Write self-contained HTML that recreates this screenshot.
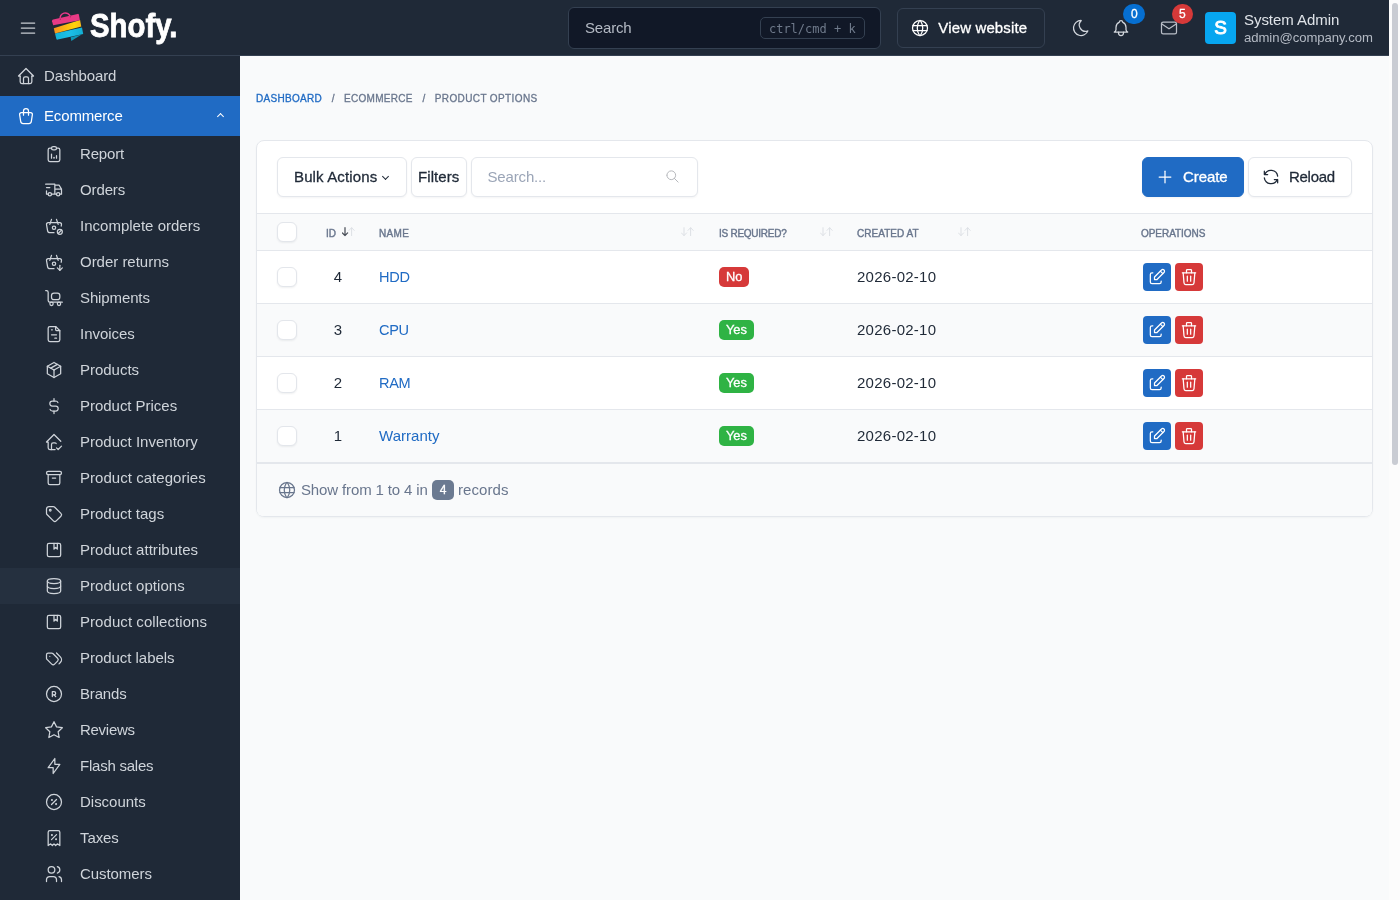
<!DOCTYPE html>
<html lang="en"><head>
<meta charset="utf-8">
<title>Product options | Shofy</title>
<style>
:root{--ff:"Liberation Sans",sans-serif;--dark:#1f2937;--primary:#206bc4;--text:#1f2937;--muted:#69768d;--border:#e4e7ec;--bg:#f9fafb}
*{box-sizing:border-box}
html,body{margin:0;padding:0}
body{width:1400px;height:900px;overflow:hidden;position:relative;background:var(--bg);color:var(--text);font-family:var(--ff);font-size:14px;line-height:20px;-webkit-font-smoothing:antialiased}
svg.i{fill:none;stroke:currentColor;stroke-width:1.5;stroke-linecap:round;stroke-linejoin:round;display:block}
a{color:var(--primary);text-decoration:none}
.abs{position:absolute}
/* header */
.header{will-change:transform;position:absolute;left:0;top:0;width:1389px;height:56px;background:var(--dark);border-bottom:1px solid #344051;color:#fff}

.logo{left:90px;top:5.7px;font-family:"Liberation Sans",sans-serif;font-size:32.6px;line-height:40px;font-weight:700;letter-spacing:0;-webkit-text-stroke:.8px #fff;color:#fff;white-space:nowrap;transform:scaleX(.9);transform-origin:0 0}
.hsearch{left:568px;top:7px;width:313px;height:42px;border:1px solid #344051;border-radius:6px;background:#111827}
.kbd{left:191px;top:9px;width:104.6px;height:22px;border:1px solid #344051;border-radius:5px;font-family:"DejaVu Sans Mono","Liberation Mono",monospace;font-size:12px;line-height:22px;text-align:center;color:#6f7a8b;white-space:nowrap}
.hview{left:897.3px;top:8px;width:147.4px;height:40px;border:1px solid #344051;border-radius:6px;color:#fff;white-space:nowrap}
.hbadge{top:4px;height:20px;border-radius:10px;color:#fff;font-size:12px;line-height:20px;font-weight:400;-webkit-text-stroke:.3px;text-align:center}
.avatar{left:1205px;top:12px;width:31.2px;height:32px;border-radius:4px;background:#07a6f0;color:#fff;font-weight:400;-webkit-text-stroke:.9px #fff;font-size:19px;line-height:32px;text-align:center}
/* sidebar */
.sidebar{will-change:transform;position:absolute;left:0;top:56px;width:240px;height:844px;background:var(--dark);color:#cfd4da}

.nav1{position:relative;height:40px;padding:10px 0 10px 44px;white-space:nowrap}
.nav1 svg.i{position:absolute;left:16px;top:10px}
.nav1 .chev{position:absolute;left:217.9px;top:17.6px;width:5px;height:5px;border-left:1px solid #fff;border-top:1px solid #fff;transform:rotate(45deg)}
.nav1.act{background:var(--primary);color:#fff}
.nav2{position:relative;height:36px;padding:8px 0 8px 80px;white-space:nowrap}
.nav2 svg.i{position:absolute;left:44px;top:8px}
.nav2.cur{background:#25303f}
/* scrollbar */
.sb{position:absolute;left:1389px;top:0;width:11px;height:900px;background:#fcfcfc}
.sb i{position:absolute;left:3px;top:3px;width:6px;height:462px;border-radius:3px;background:#c9ccd3}

.bc{left:16px;top:33px;height:20px;font-size:10px;line-height:20px;font-weight:400;-webkit-text-stroke:.3px;letter-spacing:.04em;color:var(--muted);white-space:nowrap;text-transform:uppercase}
.bc i{font-style:normal;display:inline-block;width:22px;text-align:center;letter-spacing:0}
.card{left:16px;top:84px;width:1117px;height:377px;background:#fff;border:1px solid var(--border);border-radius:8px;box-shadow:0 1px 2px rgba(31,41,55,.04)}
.btn{height:40px;border:1px solid var(--border);border-radius:6px;background:#fff;box-shadow:0 1px 2px rgba(31,41,55,.05);white-space:nowrap}
.btn.pri{background:var(--primary);border-color:var(--primary);color:#fff}
.caret{position:absolute;left:105px;top:16px;width:5px;height:5px;border-left:1px solid var(--text);border-bottom:1px solid var(--text);transform:rotate(-45deg)}
.thead{left:0;top:72px;width:1115px;height:38px;background:var(--bg);border-top:1px solid var(--border);border-bottom:1px solid var(--border)}
.th{top:9.5px;font-size:10px;line-height:20px;font-weight:400;-webkit-text-stroke:.4px;color:var(--muted);white-space:nowrap}
.srt{top:13px;fill:none;stroke-width:1;stroke-linecap:round;stroke-linejoin:round}
.cb{position:absolute;width:20px;height:20px;border:1px solid #e3e6eb;border-radius:6px;background:#fff;box-shadow:0 1px 2px rgba(31,41,55,.07)}
.row{left:0;width:1115px;height:53px;border-bottom:1px solid var(--border);white-space:nowrap}
.row.alt{background:var(--bg)}
.id{left:61px;top:16px;width:40px;text-align:center}
.bdg{left:462px;top:16px;height:20px;border-radius:5px;color:#fff;font-size:12px;line-height:20px;font-weight:400;-webkit-text-stroke:.3px;padding:0 7px}
.bdg.red{background:#d63939}
.bdg.grn{background:#2fb344}
.op{top:12px;width:28px;height:28px;border-radius:4px;color:#fff}
.op svg{position:absolute;left:4px;top:4px}
.foot{left:0;top:322px;width:1115px;height:53px;border-top:1px solid var(--border);background:var(--bg);border-radius:0 0 6px 6px;color:var(--muted)}
.cnt{left:175px;top:16px;width:22px;height:20px;border-radius:5px;background:#6b7a91;color:#fff;font-size:12px;line-height:20px;font-weight:400;-webkit-text-stroke:.3px;text-align:center}
.id{font-size:15px}
/* main */
.main{will-change:transform;position:absolute;left:240px;top:56px;width:1149px;height:844px}
</style>
</head>
<body>
<div class="header" id="header">
<svg class="i abs" style="left:18px;top:18px;color:#c8ccd2" width="20" height="20" viewBox="0 0 24 24"><path d="M4 6l16 0"></path><path d="M4 12l16 0"></path><path d="M4 18l16 0"></path></svg>
<svg class="abs" style="left:44px;top:6px" width="50" height="42" viewBox="0 0 50 42">
<defs><linearGradient id="og" x1="0" y1="0" x2="1" y2="0"><stop offset="0" stop-color="#f7931e"></stop><stop offset=".75" stop-color="#ffd40a"></stop><stop offset="1" stop-color="#f9b81a"></stop></linearGradient>
<linearGradient id="cg" x1="0" y1="0" x2="1" y2="0"><stop offset="0" stop-color="#12b3d6"></stop><stop offset=".5" stop-color="#1dc0ea"></stop><stop offset="1" stop-color="#12aed2"></stop></linearGradient></defs>
<path d="M26.6 31.2 L27.3 35 L37.6 28.6Z" fill="#0e98b8"></path>
<path d="M11 27.4 L38 21.500 L39.2 28 L13.8 33.6 Q12.6 33.9 12.3 32.8Z" fill="url(#cg)"></path>
<path d="M9.8 22.2 L36.1 13.9 L37.3 20.5 L11 27.6Z" fill="url(#og)"></path>
<path d="M16.3 13.4 a5.1 5.1 0 0 1 10 -2.6" fill="none" stroke="#e8388a" stroke-width="1.5" stroke-linecap="round"></path>
<path d="M9.2 13.6 L33.6 7.9 Q34.6 7.7 34.9 8.7 L35.9 14.2 L9.2 19.3 L8 15.2 Q7.8 14 9.2 13.6Z" fill="#e83a85"></path>
<circle cx="16.3" cy="13.3" r=".7" fill="#b02a66"></circle><circle cx="26.4" cy="10.8" r=".7" fill="#b02a66"></circle>
</svg>
<span class="abs logo">Shofy.</span>
<div class="abs hsearch"><span class="abs" style="left: 16px; top: 10px; color: rgb(180, 186, 196); font-size: 15px; letter-spacing: -0.18px;">Search</span><span class="abs kbd">ctrl/cmd + k</span></div>
<div class="abs hview"><svg class="i abs" style="left:12px;top:9px" width="20" height="20" viewBox="0 0 24 24"><path d="M3 12a9 9 0 1 0 18 0a9 9 0 0 0 -18 0"></path><path d="M3.6 9h16.800"></path><path d="M3.6 15h16.800"></path><path d="M11.5 3a17 17 0 0 0 0 18"></path><path d="M12.500 3a17 17 0 0 1 0 18"></path></svg><span class="abs" style="left: 40px; top: 9px; font-weight: 400; -webkit-text-stroke: 0.3px; font-size: 15px; letter-spacing: 0.14px;">View website</span></div>
<svg class="i abs" style="left:1070.5px;top:18px;color:#d3d7dd" width="20" height="20" viewBox="0 0 24 24"><path d="M12 3c.132 0 .263 0 .393 0a7.500 7.500 0 0 0 7.920 12.446a9 9 0 1 1 -8.313 -12.454z"></path></svg>
<svg class="i abs" style="left:1110.5px;top:18px;color:#d3d7dd" width="20" height="20" viewBox="0 0 24 24"><path d="M10 5a2 2 0 1 1 4 0a7 7 0 0 1 4 6v3a4 4 0 0 0 2 3h-16a4 4 0 0 0 2 -3v-3a7 7 0 0 1 4 -6"></path><path d="M9 17v1a3 3 0 0 0 6 0v-1"></path></svg>
<span class="abs hbadge" style="left:1123.4px;width:22px;background:#066fd1">0</span>
<svg class="i abs" style="left:1158.5px;top:18px;color:#b9bec7" width="20" height="20" viewBox="0 0 24 24"><path d="M3 7a2 2 0 0 1 2 -2h14a2 2 0 0 1 2 2v10a2 2 0 0 1 -2 2h-14a2 2 0 0 1 -2 -2v-10z"></path><path d="M3 7l9 6l9 -6"></path></svg>
<span class="abs hbadge" style="left:1171.8px;width:21.2px;background:#d63939">5</span>
<span class="abs avatar">S</span>
<span class="abs" style="left: 1244px; top: 10px; color: rgb(223, 227, 232); white-space: nowrap; font-size: 15px; letter-spacing: -0.05px;">System Admin</span>
<span class="abs" style="left: 1244px; top: 29px; color: rgb(180, 186, 196); font-size: 13.13px; line-height: 18px; white-space: nowrap; letter-spacing: -0.06px;">admin@company.com</span>
</div>
<div class="sidebar" id="sidebar">
<div class="nav1"><svg class="i" width="20" height="20" viewBox="0 0 24 24"><path d="M5 12l-2 0l9 -9l9 9l-2 0"></path><path d="M5 12v7a2 2 0 0 0 2 2h10a2 2 0 0 0 2 -2v-7"></path><path d="M9 21v-6a2 2 0 0 1 2 -2h2a2 2 0 0 1 2 2v6"></path></svg><span style="font-size: 15px; letter-spacing: -0.13px;">Dashboard</span></div>
<div class="nav1 act"><svg class="i" width="20" height="20" viewBox="0 0 24 24"><path d="M6.331 8h11.339a2 2 0 0 1 1.977 2.304l-1.255 8.152a3 3 0 0 1 -2.966 2.544h-6.852a3 3 0 0 1 -2.965 -2.544l-1.255 -8.152a2 2 0 0 1 1.977 -2.304z"></path><path d="M9 11v-5a3 3 0 0 1 6 0v5"></path></svg><span style="font-size: 15px; letter-spacing: -0.15px;">Ecommerce</span><b class="chev"></b></div>
<div class="nav2"><svg class="i" width="20" height="20" viewBox="0 0 24 24"><path d="M9 5h-2a2 2 0 0 0 -2 2v12a2 2 0 0 0 2 2h10a2 2 0 0 0 2 -2v-12a2 2 0 0 0 -2 -2h-2"></path><path d="M9 3m0 2a2 2 0 0 1 2 -2h2a2 2 0 0 1 2 2v0a2 2 0 0 1 -2 2h-2a2 2 0 0 1 -2 -2z"></path><path d="M9 17v-5"></path><path d="M12 17v-1"></path><path d="M15 17v-3"></path></svg><span style="font-size: 15px; letter-spacing: -0.17px;">Report</span></div>
<div class="nav2"><svg class="i" width="20" height="20" viewBox="0 0 24 24"><path d="M7 17m-2 0a2 2 0 1 0 4 0a2 2 0 1 0 -4 0"></path><path d="M17 17m-2 0a2 2 0 1 0 4 0a2 2 0 1 0 -4 0"></path><path d="M5 17h-2v-4m-1 -8h11v12m-4 0h6m4 0h2v-6h-8m0 -5h5l3 5"></path><path d="M3 9l4 0"></path></svg><span style="font-size: 15px; letter-spacing: -0.12px;">Orders</span></div>
<div class="nav2"><svg class="i" width="20" height="20" viewBox="0 0 24 24"><path d="M17 10l-2 -6"></path><path d="M7 10l2 -6"></path><path d="M12 20h-4.756a3 3 0 0 1 -2.965 -2.544l-1.255 -7.152a2 2 0 0 1 1.977 -2.304h13.999a2 2 0 0 1 1.977 2.304l-.3 1.713"></path><path d="M10 14a2 2 0 1 0 4 0a2 2 0 0 0 -4 0"></path><path d="M19 19m-3 0a3 3 0 1 0 6 0a3 3 0 1 0 -6 0"></path><path d="M17 21l4 -4"></path></svg><span style="font-size: 15px; letter-spacing: 0.01px;">Incomplete orders</span></div>
<div class="nav2"><svg class="i" width="20" height="20" viewBox="0 0 24 24"><path d="M17 10l-2 -6"></path><path d="M7 10l2 -6"></path><path d="M12 20h-4.756a3 3 0 0 1 -2.965 -2.544l-1.255 -7.152a2 2 0 0 1 1.977 -2.304h13.999a2 2 0 0 1 1.977 2.304l-.349 1.989"></path><path d="M10 14a2 2 0 1 0 4 0a2 2 0 0 0 -4 0"></path><path d="M19 16v6"></path><path d="M22 19l-3 3l-3 -3"></path></svg><span style="font-size: 15px; letter-spacing: -0.02px;">Order returns</span></div>
<div class="nav2"><svg class="i" width="20" height="20" viewBox="0 0 24 24"><path d="M2 3h1a2 2 0 0 1 2 2v10a2 2 0 0 0 2 2h15"></path><path d="M9 6m0 3a3 3 0 0 1 3 -3h4a3 3 0 0 1 3 3v2a3 3 0 0 1 -3 3h-4a3 3 0 0 1 -3 -3z"></path><path d="M9 19m-2 0a2 2 0 1 0 4 0a2 2 0 1 0 -4 0"></path><path d="M18 19m-2 0a2 2 0 1 0 4 0a2 2 0 1 0 -4 0"></path></svg><span style="font-size: 15px; letter-spacing: -0.12px;">Shipments</span></div>
<div class="nav2"><svg class="i" width="20" height="20" viewBox="0 0 24 24"><path d="M14 3v4a1 1 0 0 0 1 1h4"></path><path d="M17 21h-10a2 2 0 0 1 -2 -2v-14a2 2 0 0 1 2 -2h7l5 5v11a2 2 0 0 1 -2 2z"></path><path d="M9 7l1 0"></path><path d="M9 13l6 0"></path><path d="M13 17l2 0"></path></svg><span style="font-size: 15px; letter-spacing: -0.03px;">Invoices</span></div>
<div class="nav2"><svg class="i" width="20" height="20" viewBox="0 0 24 24"><path d="M12 3l8 4.500l0 9l-8 4.500l-8 -4.500l0 -9l8 -4.500"></path><path d="M12 12l8 -4.500"></path><path d="M12 12l0 9"></path><path d="M12 12l-8 -4.500"></path><path d="M16 5.250l-8 4.500"></path></svg><span style="font-size: 15px; letter-spacing: -0.02px;">Products</span></div>
<div class="nav2"><svg class="i" width="20" height="20" viewBox="0 0 24 24"><path d="M16.700 8a3 3 0 0 0 -2.700 -2h-4a3 3 0 0 0 0 6h4a3 3 0 0 1 0 6h-4a3 3 0 0 1 -2.700 -2"></path><path d="M12 3v3m0 12v3"></path></svg><span style="font-size: 15px; letter-spacing: -0.03px;">Product Prices</span></div>
<div class="nav2"><svg class="i" width="20" height="20" viewBox="0 0 24 24"><path d="M9 21v-6a2 2 0 0 1 2 -2h2c.641 0 1.212 .302 1.578 .771"></path><path d="M20.136 11.136l-8.136 -8.136l-9 9h2v7a2 2 0 0 0 2 2h6.344"></path><path d="M15 19l2 2l4 -4"></path></svg><span style="font-size: 15px; letter-spacing: 0.01px;">Product Inventory</span></div>
<div class="nav2"><svg class="i" width="20" height="20" viewBox="0 0 24 24"><path d="M3 4m0 2a2 2 0 0 1 2 -2h14a2 2 0 0 1 2 2v0a2 2 0 0 1 -2 2h-14a2 2 0 0 1 -2 -2z"></path><path d="M5 8v10a2 2 0 0 0 2 2h10a2 2 0 0 0 2 -2v-10"></path><path d="M10 12l4 0"></path></svg><span style="font-size: 15px; letter-spacing: 0.04px;">Product categories</span></div>
<div class="nav2"><svg class="i" width="20" height="20" viewBox="0 0 24 24"><path d="M7.500 7.500m-1 0a1 1 0 1 0 2 0a1 1 0 1 0 -2 0"></path><path d="M3 6v5.172a2 2 0 0 0 .586 1.414l7.710 7.710a2.410 2.410 0 0 0 3.408 0l5.592 -5.592a2.410 2.410 0 0 0 0 -3.408l-7.710 -7.710a2 2 0 0 0 -1.414 -.586h-5.172a3 3 0 0 0 -3 3z"></path></svg><span style="font-size: 15px;">Product tags</span></div>
<div class="nav2"><svg class="i" width="20" height="20" viewBox="0 0 24 24"><path d="M4 4m0 2a2 2 0 0 1 2 -2h12a2 2 0 0 1 2 2v12a2 2 0 0 1 -2 2h-12a2 2 0 0 1 -2 -2z"></path><path d="M12 4v7l2 -2l2 2v-7"></path></svg><span style="font-size: 15px; letter-spacing: 0.03px;">Product attributes</span></div>
<div class="nav2 cur"><svg class="i" width="20" height="20" viewBox="0 0 24 24"><path d="M12 6m-8 0a8 3 0 1 0 16 0a8 3 0 1 0 -16 0"></path><path d="M4 6v6a8 3 0 0 0 16 0v-6"></path><path d="M4 12v6a8 3 0 0 0 16 0v-6"></path></svg><span style="font-size: 15px; letter-spacing: 0.03px;">Product options</span></div>
<div class="nav2"><svg class="i" width="20" height="20" viewBox="0 0 24 24"><path d="M4 4m0 2a2 2 0 0 1 2 -2h12a2 2 0 0 1 2 2v12a2 2 0 0 1 -2 2h-12a2 2 0 0 1 -2 -2z"></path><path d="M12 4v7l2 -2l2 2v-7"></path></svg><span style="font-size: 15px; letter-spacing: 0.06px;">Product collections</span></div>
<div class="nav2"><svg class="i" width="20" height="20" viewBox="0 0 24 24"><path d="M3 8v4.172a2 2 0 0 0 .586 1.414l5.710 5.710a2.410 2.410 0 0 0 3.408 0l3.592 -3.592a2.410 2.410 0 0 0 0 -3.408l-5.710 -5.710a2 2 0 0 0 -1.414 -.586h-4.172a2 2 0 0 0 -2 2z"></path><path d="M18 19l1.592 -1.592a4.820 4.820 0 0 0 0 -6.816l-4.592 -4.592"></path><path d="M7 10h-.010"></path></svg><span style="font-size: 15px; letter-spacing: -0.04px;">Product labels</span></div>
<div class="nav2"><svg class="i" width="20" height="20" viewBox="0 0 24 24"><path d="M12 12m-9 0a9 9 0 1 0 18 0a9 9 0 1 0 -18 0"></path><path d="M10 15v-6h2a2 2 0 1 1 0 4h-2"></path><path d="M14 15l-2 -2"></path></svg><span style="font-size: 15px; letter-spacing: -0.17px;">Brands</span></div>
<div class="nav2"><svg class="i" width="20" height="20" viewBox="0 0 24 24"><path d="M12 17.750l-6.172 3.245l1.179 -6.873l-5 -4.867l6.900 -1l3.086 -6.253l3.086 6.253l6.900 1l-5 4.867l1.179 6.873z"></path></svg><span style="font-size: 15px; letter-spacing: -0.28px;">Reviews</span></div>
<div class="nav2"><svg class="i" width="20" height="20" viewBox="0 0 24 24"><path d="M13 3l0 7l6 0l-8 11l0 -7l-6 0l8 -11"></path></svg><span style="font-size: 15px; letter-spacing: -0.23px;">Flash sales</span></div>
<div class="nav2"><svg class="i" width="20" height="20" viewBox="0 0 24 24"><path d="M9 15l6 -6"></path><circle cx="9.500" cy="9.500" r=".5" fill="currentColor"></circle><circle cx="14.500" cy="14.500" r=".5" fill="currentColor"></circle><path d="M12 12m-9 0a9 9 0 1 0 18 0a9 9 0 1 0 -18 0"></path></svg><span style="font-size: 15px; letter-spacing: -0.02px;">Discounts</span></div>
<div class="nav2"><svg class="i" width="20" height="20" viewBox="0 0 24 24"><path d="M9 14l6 -6"></path><circle cx="9.500" cy="8.500" r=".5" fill="currentColor"></circle><circle cx="14.500" cy="13.500" r=".5" fill="currentColor"></circle><path d="M5 21v-16a2 2 0 0 1 2 -2h10a2 2 0 0 1 2 2v16l-3 -2l-2 2l-2 -2l-2 2l-2 -2l-3 2"></path></svg><span style="font-size: 15px; letter-spacing: -0.08px;">Taxes</span></div>
<div class="nav2"><svg class="i" width="20" height="20" viewBox="0 0 24 24"><path d="M9 7m-4 0a4 4 0 1 0 8 0a4 4 0 1 0 -8 0"></path><path d="M3 21v-2a4 4 0 0 1 4 -4h4a4 4 0 0 1 4 4v2"></path><path d="M16 3.130a4 4 0 0 1 0 7.750"></path><path d="M21 21v-2a4 4 0 0 0 -3 -3.850"></path></svg><span style="font-size: 15px; letter-spacing: -0.08px;">Customers</span></div>
</div>
<div class="main" id="main">
<div class="abs bc"><a style="font-size: 10px; letter-spacing: 0.3px;">DASHBOARD</a><i>/</i><span style="font-size: 10px; letter-spacing: 0.29px;">ECOMMERCE</span><i>/</i><span style="font-size: 10px; letter-spacing: 0.38px;">PRODUCT OPTIONS</span></div>
<div class="abs card">
 <div class="abs btn" style="left:20px;top:16px;width:129.5px"><span class="abs" style="left: 16px; top: 9px; font-weight: 400; -webkit-text-stroke: 0.3px; font-size: 15px; letter-spacing: 0.13px;">Bulk Actions</span><b class="caret"></b></div>
 <div class="abs btn" style="left:153.5px;top:16px;width:56px"><span class="abs" style="left: 6.5px; top: 9px; font-weight: 400; -webkit-text-stroke: 0.3px; font-size: 15px; letter-spacing: 0.07px;">Filters</span></div>
 <div class="abs btn" style="left:213.5px;top:16px;width:227.6px"><span class="abs" style="left: 16px; top: 9px; color: rgb(155, 165, 183); font-size: 15px; letter-spacing: -0.16px;">Search...</span><svg class="i abs" style="left:193px;top:10.5px;color:#b1b3b8;stroke-width:1.5" width="15" height="15" viewBox="0 0 24 24"><path d="M10 10m-7 0a7 7 0 1 0 14 0a7 7 0 1 0 -14 0"></path><path d="M21 21l-6 -6"></path></svg></div>
 <div class="abs btn pri" style="left:885px;top:16px;width:102px"><svg class="i abs" style="left:12px;top:9px" width="20" height="20" viewBox="0 0 24 24"><path d="M12 5l0 14"></path><path d="M5 12l14 0"></path></svg><span class="abs" style="left: 40px; top: 9px; font-weight: 400; -webkit-text-stroke: 0.3px; font-size: 15px; letter-spacing: -0.08px;">Create</span></div>
 <div class="abs btn" style="left:991px;top:16px;width:104px"><svg class="i abs" style="left:12px;top:9px" width="20" height="20" viewBox="0 0 24 24"><path d="M20 11a8.100 8.100 0 0 0 -15.500 -2m-.5 -4v4h4"></path><path d="M4 13a8.100 8.100 0 0 0 15.500 2m.5 4v-4h-4"></path></svg><span class="abs" style="left: 40px; top: 9px; font-weight: 400; -webkit-text-stroke: 0.3px; font-size: 15px; letter-spacing: -0.29px;">Reload</span></div>
 <div class="abs thead">
  <b class="cb" style="left:20px;top:8px"></b>
  <span class="abs th" style="left: 69px; font-size: 10px;">ID</span><svg class="abs srt" style="left:84.9px" width="14" height="10" viewBox="0 0 14 10"><path d="M3 .7v7.8M.4 5.900l2.600 2.700l2.600 -2.700" stroke="#4b5059" stroke-width="1.25"></path><path d="M9.600 8.600v-7.800M7 3.400l2.600 -2.700l2.600 2.700" stroke="#dde0e5"></path></svg>
  <span class="abs th" style="left: 122px; font-size: 10px; letter-spacing: 0.31px;">NAME</span><svg class="abs srt" style="left:424.4px" width="14" height="10" viewBox="0 0 14 10"><path d="M3 .7v7.8M.4 5.900l2.600 2.700l2.600 -2.700" stroke="#dde0e5"></path><path d="M9.600 8.600v-7.800M7 3.400l2.600 -2.700l2.600 2.700" stroke="#dde0e5"></path></svg>
  <span class="abs th" style="left: 462px; font-size: 10px; letter-spacing: -0.26px;">IS REQUIRED?</span><svg class="abs srt" style="left:562.5px" width="14" height="10" viewBox="0 0 14 10"><path d="M3 .7v7.8M.4 5.900l2.600 2.700l2.600 -2.700" stroke="#dde0e5"></path><path d="M9.600 8.600v-7.800M7 3.400l2.600 -2.700l2.600 2.700" stroke="#dde0e5"></path></svg>
  <span class="abs th" style="left: 600px; font-size: 10px; letter-spacing: 0.04px;">CREATED AT</span><svg class="abs srt" style="left:700.5px" width="14" height="10" viewBox="0 0 14 10"><path d="M3 .7v7.8M.4 5.900l2.600 2.700l2.600 -2.700" stroke="#dde0e5"></path><path d="M9.600 8.600v-7.800M7 3.400l2.600 -2.700l2.600 2.700" stroke="#dde0e5"></path></svg>
  <span class="abs th" style="left: 884px; font-size: 10px; letter-spacing: -0.05px;">OPERATIONS</span>
 </div>
 <div class="abs row" style="top:110px">
  <b class="cb" style="left:20px;top:16px"></b>
  <span class="abs id">4</span>
  <a class="abs" style="left: 122px; top: 16px; font-size: 14.56px; letter-spacing: -0.3px;">HDD</a>
  <span class="abs bdg red" style="font-size: 12.86px; letter-spacing: -0.06px;">No</span>
  <span class="abs" style="left: 600px; top: 16px; font-size: 15px; letter-spacing: 0.26px;">2026-02-10</span>
  <span class="abs op" style="left:886px;background:var(--primary)"><svg class="i" width="20" height="20" viewBox="0 0 24 24"><path d="M7 7h-1a2 2 0 0 0 -2 2v9a2 2 0 0 0 2 2h9a2 2 0 0 0 2 -2v-1"></path><path d="M20.385 6.585a2.100 2.100 0 0 0 -2.970 -2.970l-8.415 8.385v3h3l8.385 -8.415z"></path><path d="M16 5l3 3"></path></svg></span>
  <span class="abs op" style="left:918px;background:#d63939"><svg class="i" width="20" height="20" viewBox="0 0 24 24"><path d="M4 7l16 0"></path><path d="M10 11l0 6"></path><path d="M14 11l0 6"></path><path d="M5 7l1 12a2 2 0 0 0 2 2h8a2 2 0 0 0 2 -2l1 -12"></path><path d="M9 7v-3a1 1 0 0 1 1 -1h4a1 1 0 0 1 1 1v3"></path></svg></span>
 </div>
 <div class="abs row alt" style="top:163px">
  <b class="cb" style="left:20px;top:16px"></b>
  <span class="abs id">3</span>
  <a class="abs" style="left: 122px; top: 16px; font-size: 14.56px; letter-spacing: -0.37px;">CPU</a>
  <span class="abs bdg grn" style="font-size: 12.86px; letter-spacing: -0.05px;">Yes</span>
  <span class="abs" style="left: 600px; top: 16px; font-size: 15px; letter-spacing: 0.26px;">2026-02-10</span>
  <span class="abs op" style="left:886px;background:var(--primary)"><svg class="i" width="20" height="20" viewBox="0 0 24 24"><path d="M7 7h-1a2 2 0 0 0 -2 2v9a2 2 0 0 0 2 2h9a2 2 0 0 0 2 -2v-1"></path><path d="M20.385 6.585a2.100 2.100 0 0 0 -2.970 -2.970l-8.415 8.385v3h3l8.385 -8.415z"></path><path d="M16 5l3 3"></path></svg></span>
  <span class="abs op" style="left:918px;background:#d63939"><svg class="i" width="20" height="20" viewBox="0 0 24 24"><path d="M4 7l16 0"></path><path d="M10 11l0 6"></path><path d="M14 11l0 6"></path><path d="M5 7l1 12a2 2 0 0 0 2 2h8a2 2 0 0 0 2 -2l1 -12"></path><path d="M9 7v-3a1 1 0 0 1 1 -1h4a1 1 0 0 1 1 1v3"></path></svg></span>
 </div>
 <div class="abs row" style="top:216px">
  <b class="cb" style="left:20px;top:16px"></b>
  <span class="abs id">2</span>
  <a class="abs" style="left: 122px; top: 16px; font-size: 14.56px; letter-spacing: -0.33px;">RAM</a>
  <span class="abs bdg grn" style="font-size: 12.86px; letter-spacing: -0.05px;">Yes</span>
  <span class="abs" style="left: 600px; top: 16px; font-size: 15px; letter-spacing: 0.26px;">2026-02-10</span>
  <span class="abs op" style="left:886px;background:var(--primary)"><svg class="i" width="20" height="20" viewBox="0 0 24 24"><path d="M7 7h-1a2 2 0 0 0 -2 2v9a2 2 0 0 0 2 2h9a2 2 0 0 0 2 -2v-1"></path><path d="M20.385 6.585a2.100 2.100 0 0 0 -2.970 -2.970l-8.415 8.385v3h3l8.385 -8.415z"></path><path d="M16 5l3 3"></path></svg></span>
  <span class="abs op" style="left:918px;background:#d63939"><svg class="i" width="20" height="20" viewBox="0 0 24 24"><path d="M4 7l16 0"></path><path d="M10 11l0 6"></path><path d="M14 11l0 6"></path><path d="M5 7l1 12a2 2 0 0 0 2 2h8a2 2 0 0 0 2 -2l1 -12"></path><path d="M9 7v-3a1 1 0 0 1 1 -1h4a1 1 0 0 1 1 1v3"></path></svg></span>
 </div>
 <div class="abs row alt" style="top:269px">
  <b class="cb" style="left:20px;top:16px"></b>
  <span class="abs id">1</span>
  <a class="abs" style="left: 122px; top: 16px; font-size: 15px; letter-spacing: 0.03px;">Warranty</a>
  <span class="abs bdg grn" style="font-size: 12.86px; letter-spacing: -0.05px;">Yes</span>
  <span class="abs" style="left: 600px; top: 16px; font-size: 15px; letter-spacing: 0.26px;">2026-02-10</span>
  <span class="abs op" style="left:886px;background:var(--primary)"><svg class="i" width="20" height="20" viewBox="0 0 24 24"><path d="M7 7h-1a2 2 0 0 0 -2 2v9a2 2 0 0 0 2 2h9a2 2 0 0 0 2 -2v-1"></path><path d="M20.385 6.585a2.100 2.100 0 0 0 -2.970 -2.970l-8.415 8.385v3h3l8.385 -8.415z"></path><path d="M16 5l3 3"></path></svg></span>
  <span class="abs op" style="left:918px;background:#d63939"><svg class="i" width="20" height="20" viewBox="0 0 24 24"><path d="M4 7l16 0"></path><path d="M10 11l0 6"></path><path d="M14 11l0 6"></path><path d="M5 7l1 12a2 2 0 0 0 2 2h8a2 2 0 0 0 2 -2l1 -12"></path><path d="M9 7v-3a1 1 0 0 1 1 -1h4a1 1 0 0 1 1 1v3"></path></svg></span>
 </div>
 <div class="abs foot"><svg class="i abs" style="left:20px;top:16px" width="20" height="20" viewBox="0 0 24 24"><path d="M3 12a9 9 0 1 0 18 0a9 9 0 0 0 -18 0"></path><path d="M3.600 9h16.800"></path><path d="M3.600 15h16.800"></path><path d="M11.500 3a17 17 0 0 0 0 18"></path><path d="M12.500 3a17 17 0 0 1 0 18"></path></svg><span class="abs" style="left: 44px; top: 16px; white-space: nowrap; font-size: 15px; letter-spacing: -0.13px;">Show from 1 to 4 in</span><span class="abs cnt">4</span><span class="abs" style="left: 201px; top: 16px; font-size: 15px; letter-spacing: 0.08px;">records</span></div>
</div>
</div>
<div class="sb"><i></i></div>


</body></html>
